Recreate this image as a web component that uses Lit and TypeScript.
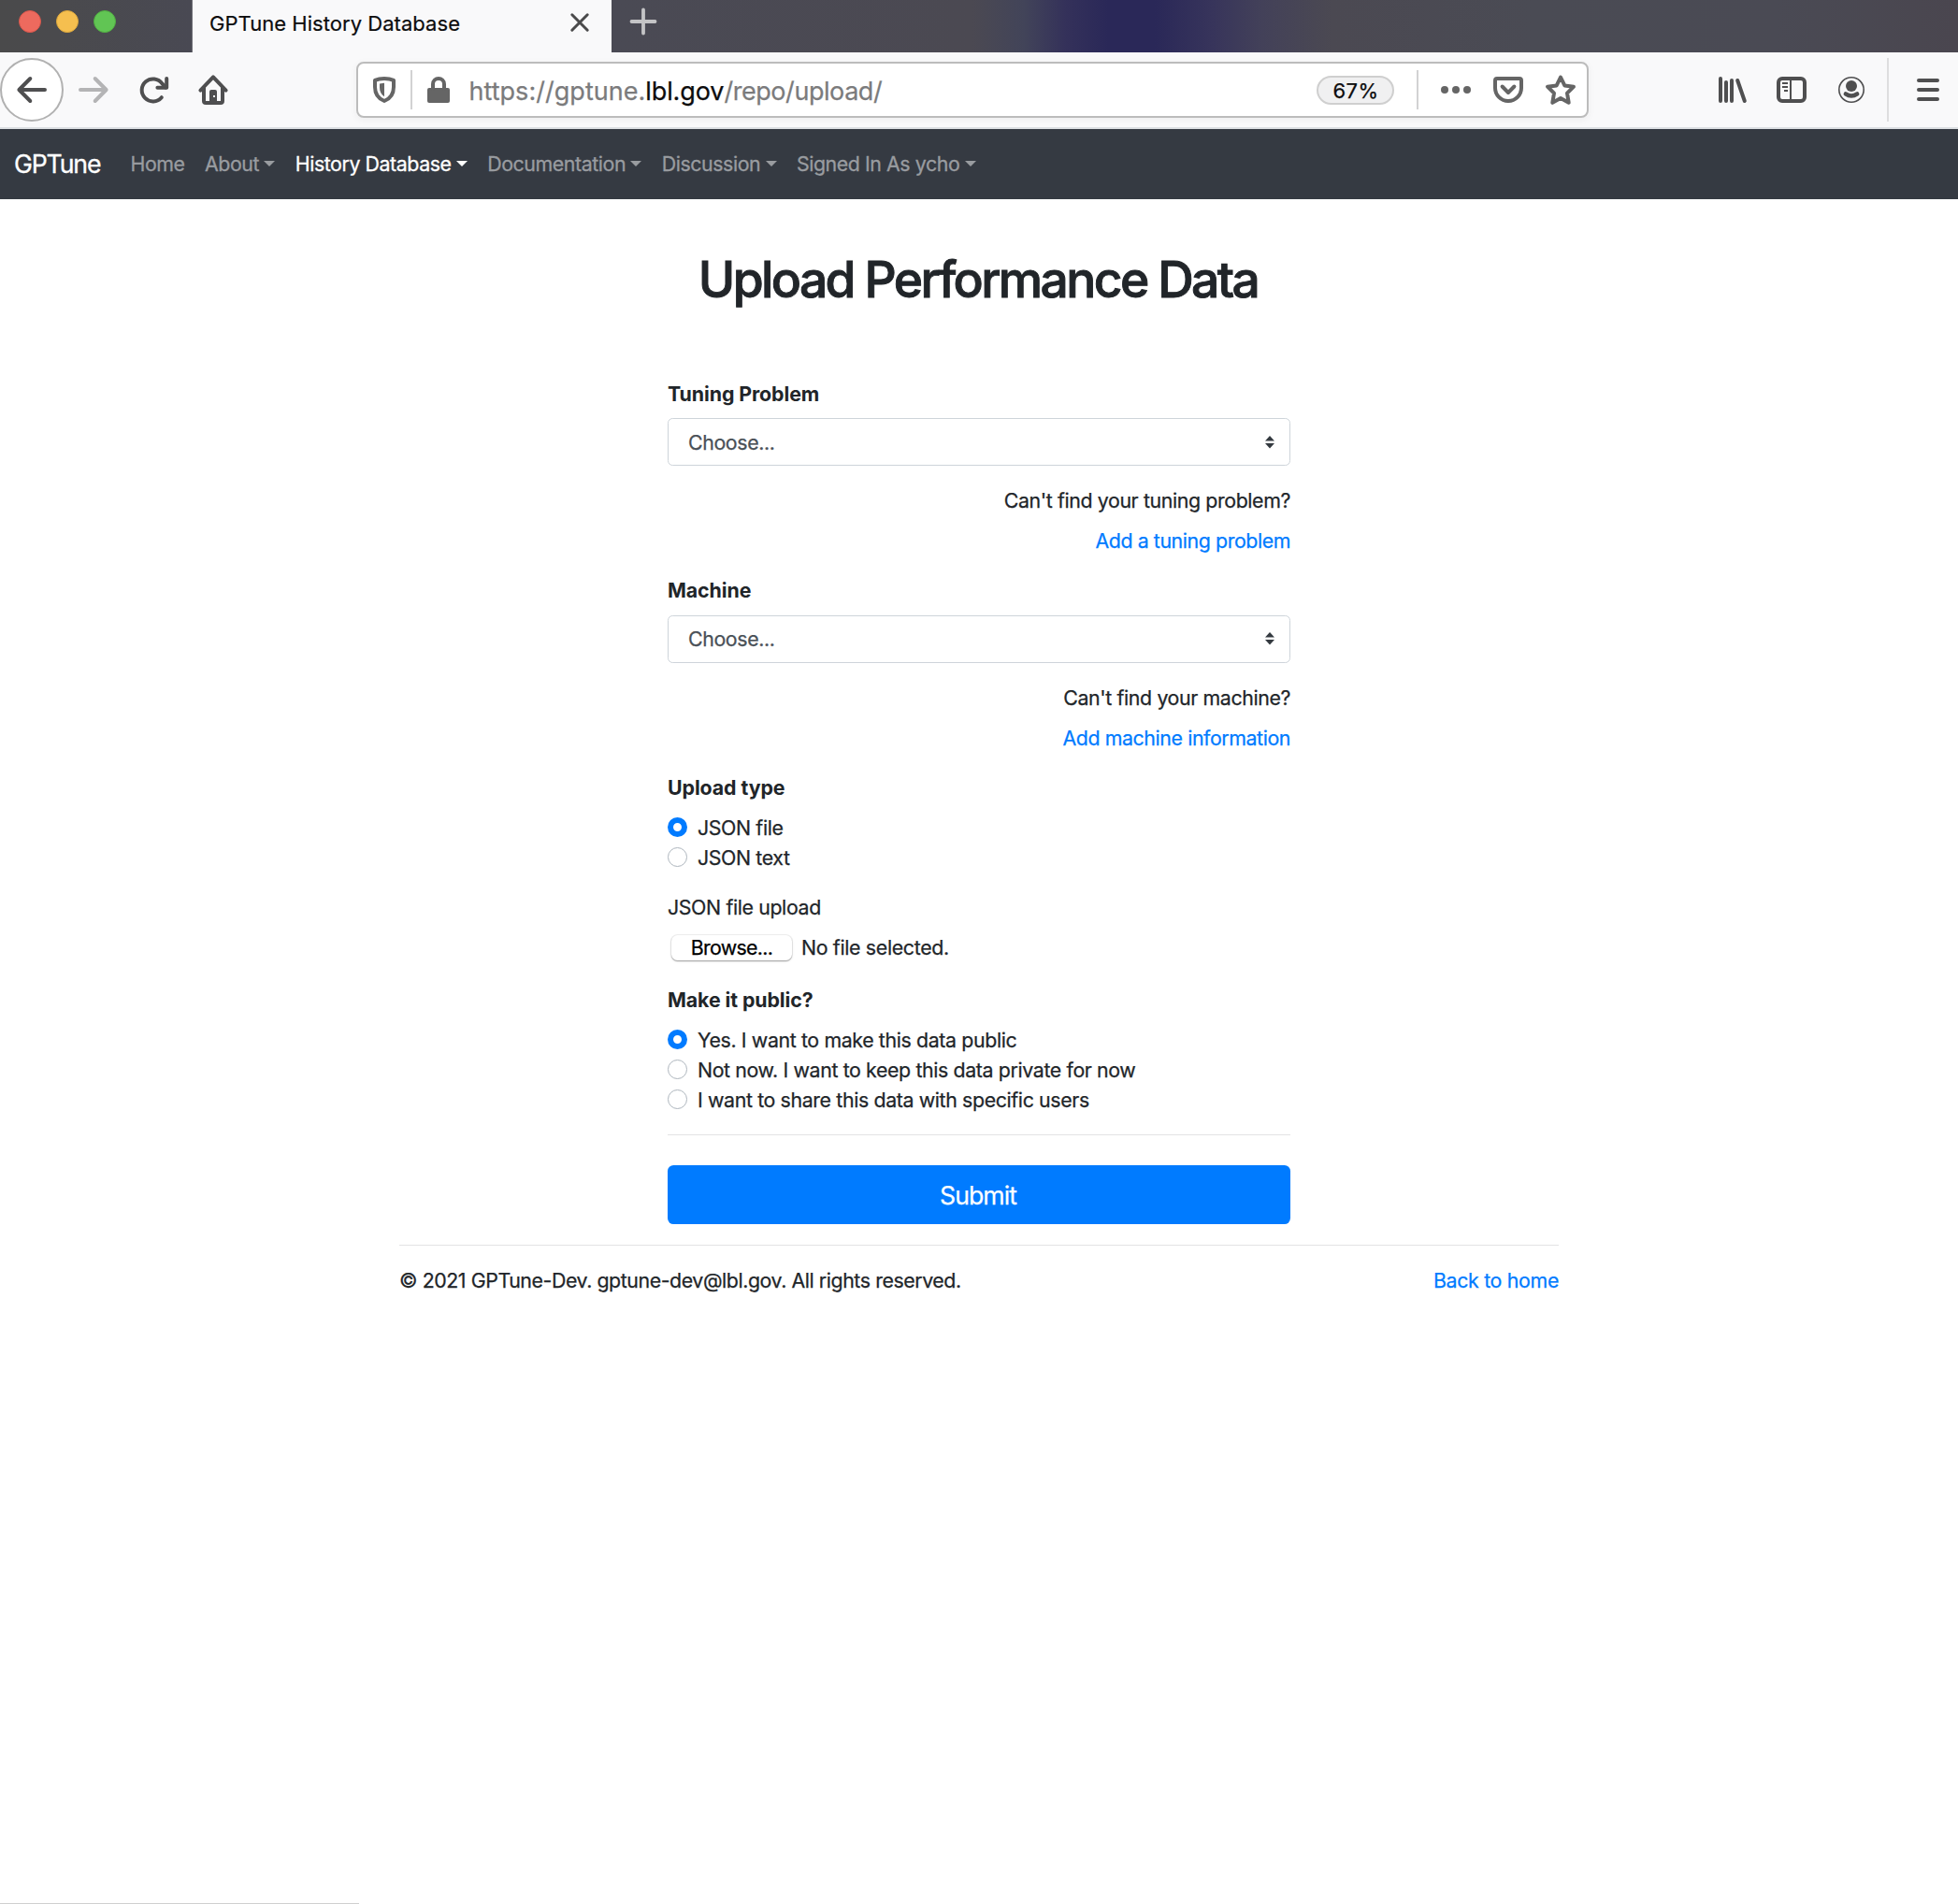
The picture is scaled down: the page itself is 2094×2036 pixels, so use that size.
import { LitElement, html, css, svg, nothing } from "lit";
import type { SVGTemplateResult } from "lit";
import { customElement, property } from "lit/decorators.js";
import { classMap } from "lit/directives/class-map.js";

/* Toolbar glyphs, all drawn on a 32x32 grid with 4px strokes. */
const GLYPHS: Record<string, SVGTemplateResult> = {
  back: svg`<path d="M14.3 4 2.4 16l11.9 12M2.6 16H30"/>`,
  forward: svg`<path d="M17.7 4l11.9 12-11.9 12M29.4 16H2"/>`,
  reload: svg`<path d="M24.8 24.2A12 12 0 1 1 25.400 9.4L29 13.4"/><path d="M30.200 4v9.8H20.4"/>`,
  home: svg`<path d="M2.4 16.6 16 2.4l13.6 14.2"/><path d="M6 14v14a2 2 0 0 0 2 2h16a2 2 0 0 0 2-2V14"/><rect class="solid" x="12" y="16" width="8" height="14" rx="2"/><rect class="hole" x="16" y="22" width="2" height="2"/>`,
  shield: svg`<path d="M15 4c4 0 7 .5 10 1.8V13c0 8-3.800 12.600-10 15C8.800 25.600 5 21 5 13V5.800C8 4.500 11 4 15 4z"/><path class="solid" d="M10 9.600 15 8.800v14.400c-3.200-2-5-5-5-9.600z"/>`,
  lock: svg`<rect class="solid" x="4" y="14" width="24" height="16" rx="2"/><path d="M10 15v-5a6 6 0 0 1 12 0v5"/>`,
  dots: svg`<circle class="solid" cx="4" cy="16" r="4"/><circle class="solid" cx="16" cy="16" r="4"/><circle class="solid" cx="28" cy="16" r="4"/>`,
  pocket: svg`<path d="M4 4h24a2 2 0 0 1 2 2v8a14 14 0 0 1-28 0V6a2 2 0 0 1 2-2z"/><path d="M9.600 12.500 16 19l6.400-6.500"/>`,
  star: svg`<path d="M16 2.500 20.300 11.400 30 12.700 23 19.700 24.700 29.800 16 25 7.300 29.800 9 19.700 2 12.700 11.700 11.400z"/>`,
  library: svg`<path d="M4 4v24M10 8v20M16 6v22M22.200 6l7.600 22"/>`,
  sidebar: svg`<rect x="2" y="4" width="28" height="24" rx="4"/><path class="thin" d="M15 5v22M6 9h6M6 13h6M8 17h4"/>`,
  account: svg`<circle class="hair" cx="16" cy="16" r="13.200"/><circle class="solid" cx="16" cy="12" r="6"/><path d="M9.800 20.400Q16 24.800 22.200 20.400" stroke-width="4.400"/>`,
  menu: svg`<path d="M6 6h20M6 16h20M6 26h20"/>`,
  close: svg`<path class="cross" d="M7.800 7.800 24.200 24.200M24.200 7.800 7.800 24.200"/>`,
  plus: svg`<path class="plus" d="M16 3.500v25M3.500 16h25"/>`,
};

@customElement("ui-glyph")
export class UiGlyph extends LitElement {
  @property() name = "menu";

  static styles = css`
    :host { display: block; flex: none; width: 32px; height: 32px; }
    svg { display: block; overflow: visible; fill: none; stroke: currentColor; stroke-width: 4; stroke-linecap: round; stroke-linejoin: round; }
    .solid { fill: currentColor; stroke: none; }
    .hole { fill: #f9f9fa; stroke: none; }
    .thin { stroke-width: 2; stroke-linecap: butt; }
    .hair { stroke-width: 1.6; }
    .cross { stroke-width: 3; }
    .plus { stroke-width: 3.8; }
  `;

  render() {
    return html`<svg width="32" height="32" viewBox="0 0 32 32" aria-hidden="true">${GLYPHS[this.name]}</svg>`;
  }
}

@customElement("browser-chrome")
export class BrowserChrome extends LitElement {
  static styles = css`
    :host { display: block; font-family: Inter, "Liberation Sans", sans-serif; }
    .tabs {
      display: flex; align-items: stretch; height: 56px; color: #0c0c0d;
      background: linear-gradient(90deg, #4a4a4b 0, #4a4a4d 60px, #494953 206px, #4a4a54 654px, #4b4952 1040px,
        #424459 1095px, #34315a 1140px, #2a2858 1185px, #2a2858 1235px, #37345b 1295px, #434159 1350px,
        #4b4952 1425px, #4a4b54 1640px, #4a4a54 1900px, #4a464f 2094px);
    }
    .lights { display: flex; gap: 16px; padding: 11px 0 0 20px; width: 185px; box-sizing: content-box; border-right: 1px solid #717178; }
    .light { width: 24px; height: 24px; border-radius: 50%; box-sizing: border-box; }
    .red { background: #ed6a5e; border: 1px solid #d9574c; }
    .amber { background: #f5bf4f; border: 1px solid #dba73d; }
    .green { background: #61c554; border: 1px solid #51ad42; }
    .tab { display: flex; align-items: center; justify-content: space-between; box-sizing: border-box; width: 448px; padding: 0 18px 7px 18px; background: #f9f9fa; font-size: 22px; letter-spacing: .04px; white-space: nowrap; -webkit-text-stroke: .2px currentColor; }
    .tab ui-glyph { color: #4a4a4b; margin-top: -1px; }
    .new { padding: 7px 0 0 18px; color: #c4c4c6; }
    .bar { display: flex; align-items: center; height: 80px; background: #f9f9fa; border-bottom: 2px solid #dcdfe2; color: #4f4f50; }
    .back { box-sizing: border-box; width: 68px; height: 68px; padding: 14px 16px 16px 16px; padding: 16px; border: 2px solid #b1b1b1; border-radius: 50%; background: #fff; }
    .forward { margin-left: 16px; color: #b4b4b5; }
    .reload { margin-left: 32px; }
    .home { margin-left: 32px; }
    .url { display: flex; align-items: center; box-sizing: border-box; width: 1318px; height: 60px; margin-left: 137px; padding: 0 12px 0 13px; border: 2px solid #bcbcbc; border-radius: 8px; background: #fff; color: #656565; box-shadow: 0 2px 8px rgba(0, 0, 0, .05); }
    .rule { flex: none; width: 2px; height: 42px; background: #d2d2d3; }
    .url .first { margin: 0 12px 0 11px; }
    .address { margin: 3px auto 0 16.500px; font-size: 27px; letter-spacing: .03px; color: #7b7b7c; -webkit-text-stroke: .25px currentColor; }
    .domain { color: #0c0c0d; letter-spacing: -.1px; }
    .path { letter-spacing: -.440px; }
    .zoom { box-sizing: border-box; width: 83px; height: 31px; border: 2px solid #cfcfcf; border-radius: 16px; background: #f0f0f1; color: #0c0c0d; font-size: 22px; line-height: 28px; text-align: center; text-indent: 1px; letter-spacing: .4px; }
    .url .second { margin: 0 24px; }
    .gap { margin-left: 24px; }
    .library { margin-left: 137px; }
    .wide { margin-left: 32px; }
    .tall { height: 68px; background: #dededf; margin: 0 26px 0 22px; }
  `;

  render() {
    return html`
      <div class="tabs">
        <div class="lights"><span class="light red"></span><span class="light amber"></span><span class="light green"></span></div>
        <div class="tab"><span>GPTune History Database</span><ui-glyph name="close"></ui-glyph></div>
        <div class="new"><ui-glyph name="plus"></ui-glyph></div>
      </div>
      <div class="bar">
        <div class="back"><ui-glyph name="back"></ui-glyph></div>
        <ui-glyph class="forward" name="forward"></ui-glyph>
        <ui-glyph class="reload" name="reload"></ui-glyph>
        <ui-glyph class="home" name="home"></ui-glyph>
        <div class="url">
          <ui-glyph name="shield"></ui-glyph>
          <span class="rule first"></span>
          <ui-glyph name="lock"></ui-glyph>
          <span class="address">https://gptune.<span class="domain">lbl.gov</span><span class="path">/repo/upload/</span></span>
          <span class="zoom">67%</span>
          <span class="rule second"></span>
          <ui-glyph name="dots"></ui-glyph>
          <ui-glyph class="gap" name="pocket"></ui-glyph>
          <ui-glyph class="gap" name="star"></ui-glyph>
        </div>
        <ui-glyph class="library" name="library"></ui-glyph>
        <ui-glyph class="wide" name="sidebar"></ui-glyph>
        <ui-glyph class="wide" name="account"></ui-glyph>
        <span class="rule tall"></span>
        <ui-glyph name="menu"></ui-glyph>
      </div>
    `;
  }
}

interface NavItem { label: string; menu?: boolean; active?: boolean; }

const NAV: NavItem[] = [
  { label: "Home" },
  { label: "About", menu: true },
  { label: "History Database", menu: true, active: true },
  { label: "Documentation", menu: true },
  { label: "Discussion", menu: true },
  { label: "Signed In As ycho", menu: true },
];

@customElement("site-nav")
export class SiteNav extends LitElement {
  static styles = css`
    :host { display: block; font-family: Inter, "Liberation Sans", sans-serif; }
    nav { display: flex; align-items: center; box-sizing: border-box; height: 75px; padding: 0 0 2px 15px; background: #353a42; color: #999ca0; font-size: 21.33px; letter-spacing: -.42px; white-space: nowrap; -webkit-text-stroke: .3px currentColor; }
    .brand { width: 124.500px; color: #fff; font-size: 26.67px; letter-spacing: -1.15px; }
    .items { display: flex; gap: 21.4px; }
    .item { display: flex; align-items: center; }
    .active { color: #fff; }
    .caret { width: 0; height: 0; margin: 0 0 0 5.300px; border: 6.200px solid transparent; border-top-color: currentColor; border-bottom: 0; }
  `;

  render() {
    return html`<nav>
      <span class="brand">GPTune</span>
      <div class="items">
        ${NAV.map((n) => html`<a class=${classMap({ item: true, active: !!n.active })}>${n.label}${n.menu ? html`<span class="caret"></span>` : nothing}</a>`)}
      </div>
    </nav>`;
  }
}

@customElement("app-root")
export class AppRoot extends LitElement {
  static styles = css`
    :host { display: block; position: relative; height: 2036px; overflow: hidden; background: #fff; color: #212529; font: 400 21.33px/32px Inter, "Liberation Sans", sans-serif; letter-spacing: -.37px; -webkit-text-stroke: .25px currentColor; }
    .page { width: 1240px; margin: 0 auto; }
    h1 { margin: 0; padding: 53.600px 2px 0 0; font-size: 53.33px; font-weight: 500; line-height: 64px; letter-spacing: -2.620px; text-align: center; -webkit-text-stroke: .9px currentColor; }
    form { width: 666px; margin: 74.200px auto 0; }
    .group { margin-bottom: 21.330px; }
    .title { margin-bottom: 10.670px; }
    .bold { font-weight: 700; letter-spacing: -.08px; -webkit-text-stroke: 0; }
    .picker { display: flex; align-items: center; justify-content: space-between; box-sizing: border-box; height: 50.670px; margin-bottom: 21.330px; padding: 0 16px 0 21px; border: 1px solid #ced4da; border-radius: 5.330px; color: #495057; }
    .picker svg { display: block; fill: #343a40; }
    .help { text-align: right; margin-bottom: 10.670px; letter-spacing: -.38px; }
    .link { text-align: right; color: #007bff; letter-spacing: -.41px; }
    .choice { display: flex; align-items: center; height: 32px; }
    .dot { flex: none; box-sizing: border-box; width: 21.330px; height: 21.330px; margin: 0 10.670px 1px 0; border: 1.330px solid #adb5bd; border-radius: 50%; background: #fff; }
    .on { border: 6.400px solid #007bff; }
    .file { display: flex; align-items: center; height: 35.200px; padding: 0 0 0 4px; }
    .browse { box-sizing: border-box; width: 129px; height: 27px; margin: -2px 10px 0 0; border-radius: 6.500px; background: #fff; color: #000; line-height: 26px; text-align: center; letter-spacing: -.68px; box-shadow: 0 0 0 1px rgba(0, 0, 0, .06), 0 1px 1px rgba(0, 0, 0, .26), 0 1px 3px rgba(0, 0, 0, .12); }
    .none { margin-top: -3.200px; letter-spacing: -.33px; }
    .line { height: 1px; background: #e3e3e4; }
    .submit { box-sizing: border-box; height: 63px; margin-top: 32px; padding-right: 2px; border-radius: 6.400px; background: #007bff; color: #fff; font-size: 26.670px; line-height: 65px; letter-spacing: -.95px; text-align: center; }
    .foot { display: flex; justify-content: space-between; margin-top: 22px; padding-top: 21px; border-top: 1px solid #e3e3e4; }
    .foot .legal { letter-spacing: -.42px; }
    .foot .home { color: #007bff; letter-spacing: -.32px; }
    .status { position: absolute; left: 0; bottom: 0; width: 384px; height: 1px; background: #cfcfd0; }
  `;

  private picker(title: string, question: string, link: string) {
    return html`
      <div class="group">
        <div class="title bold">${title}</div>
        <div class="picker">
          <span>Choose...</span>
          <svg width="10" height="14" viewBox="0 0 10 14" aria-hidden="true"><path d="M5 0l5 5.500H0zM5 13.500L0 8h10z"/></svg>
        </div>
        <div class="help">${question}</div>
        <div class="link">${link}</div>
      </div>`;
  }

  private choices(title: string, options: string[]) {
    return html`
      <div class="group">
        <div class="title bold">${title}</div>
        ${options.map((o, i) => html`<div class="choice"><span class=${classMap({ dot: true, on: i === 0 })}></span>${o}</div>`)}
      </div>`;
  }

  render() {
    return html`
      <browser-chrome></browser-chrome>
      <site-nav></site-nav>
      <main class="page">
        <h1>Upload Performance Data</h1>
        <form>
          ${this.picker("Tuning Problem", "Can't find your tuning problem?", "Add a tuning problem")}
          ${this.picker("Machine", "Can't find your machine?", "Add machine information")}
          ${this.choices("Upload type", ["JSON file", "JSON text"])}
          <div class="group">
            <div class="title">JSON file upload</div>
            <div class="file"><span class="browse">Browse...</span><span class="none">No file selected.</span></div>
          </div>
          ${this.choices("Make it public?", [
            "Yes. I want to make this data public",
            "Not now. I want to keep this data private for now",
            "I want to share this data with specific users",
          ])}
          <div class="line"></div>
          <div class="submit">Submit</div>
        </form>
        <footer class="foot">
          <span class="legal">© 2021 GPTune-Dev. gptune-dev@lbl.gov. All rights reserved.</span>
          <span class="home">Back to home</span>
        </footer>
      </main>
      <div class="status"></div>
    `;
  }
}
